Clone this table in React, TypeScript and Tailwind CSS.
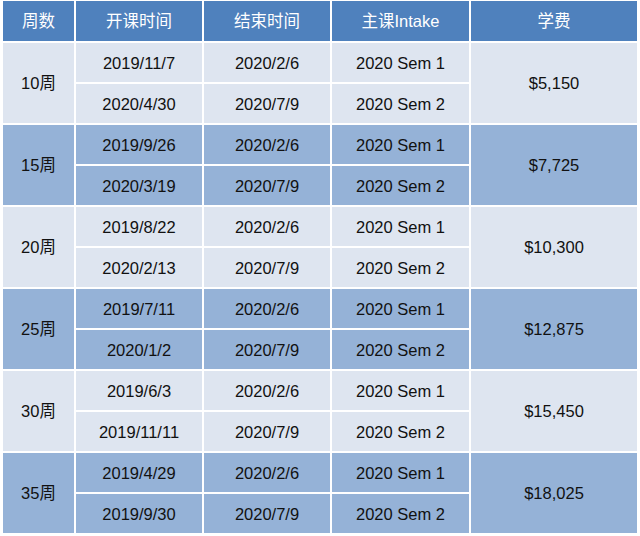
const font = { fontFamily: '"Liberation Sans", Arial, "Noto Sans CJK SC", sans-serif' }

type Group = {
  weeks: string
  rows: { start: string; end: string; intake: string }[]
  fee: string
}

const groups: Group[] = [
  {
    weeks: "10周",
    rows: [
      { start: "2019/11/7", end: "2020/2/6", intake: "2020 Sem 1" },
      { start: "2020/4/30", end: "2020/7/9", intake: "2020 Sem 2" },
    ],
    fee: "$5,150",
  },
  {
    weeks: "15周",
    rows: [
      { start: "2019/9/26", end: "2020/2/6", intake: "2020 Sem 1" },
      { start: "2020/3/19", end: "2020/7/9", intake: "2020 Sem 2" },
    ],
    fee: "$7,725",
  },
  {
    weeks: "20周",
    rows: [
      { start: "2019/8/22", end: "2020/2/6", intake: "2020 Sem 1" },
      { start: "2020/2/13", end: "2020/7/9", intake: "2020 Sem 2" },
    ],
    fee: "$10,300",
  },
  {
    weeks: "25周",
    rows: [
      { start: "2019/7/11", end: "2020/2/6", intake: "2020 Sem 1" },
      { start: "2020/1/2", end: "2020/7/9", intake: "2020 Sem 2" },
    ],
    fee: "$12,875",
  },
  {
    weeks: "30周",
    rows: [
      { start: "2019/6/3", end: "2020/2/6", intake: "2020 Sem 1" },
      { start: "2019/11/11", end: "2020/7/9", intake: "2020 Sem 2" },
    ],
    fee: "$15,450",
  },
  {
    weeks: "35周",
    rows: [
      { start: "2019/4/29", end: "2020/2/6", intake: "2020 Sem 1" },
      { start: "2019/9/30", end: "2020/7/9", intake: "2020 Sem 2" },
    ],
    fee: "$18,025",
  },
]

const headers = ["周数", "开课时间", "结束时间", "主课Intake", "学费"]

export default function App() {
  return (
    <div className="h-[536px] w-[640px] bg-white pl-[3px] pt-[1px]" style={font}>
      <div className="grid grid-cols-[71px_126px_126px_137px_166px] grid-rows-[40px_repeat(12,39px)] gap-[2px] text-[16.5px]">
        {headers.map((h) => (
          <div key={h} className="flex items-center justify-center bg-[#4f81bd] text-white">
            {h}
          </div>
        ))}
        {groups.map((g, i) => {
          const bg = i % 2 === 0 ? "bg-[#dee5f0]" : "bg-[#95b2d7]"
          return [
            <div key={g.weeks} className={`row-span-2 flex items-center justify-center pt-px text-[#111] ${bg}`}>
              {g.weeks}
            </div>,
            <div key={g.weeks + "-a1"} className={`flex items-center justify-center pt-px text-[#111] ${bg}`}>
              {g.rows[0].start}
            </div>,
            <div key={g.weeks + "-a2"} className={`flex items-center justify-center pt-px text-[#111] ${bg}`}>
              {g.rows[0].end}
            </div>,
            <div key={g.weeks + "-a3"} className={`flex items-center justify-center pt-px text-[#111] ${bg}`}>
              {g.rows[0].intake}
            </div>,
            <div key={g.weeks + "-fee"} className={`row-span-2 flex items-center justify-center pt-px text-[#111] ${bg}`}>
              {g.fee}
            </div>,
            <div key={g.weeks + "-b1"} className={`flex items-center justify-center pt-px text-[#111] ${bg}`}>
              {g.rows[1].start}
            </div>,
            <div key={g.weeks + "-b2"} className={`flex items-center justify-center pt-px text-[#111] ${bg}`}>
              {g.rows[1].end}
            </div>,
            <div key={g.weeks + "-b3"} className={`flex items-center justify-center pt-px text-[#111] ${bg}`}>
              {g.rows[1].intake}
            </div>,
          ]
        })}
      </div>
    </div>
  )
}
